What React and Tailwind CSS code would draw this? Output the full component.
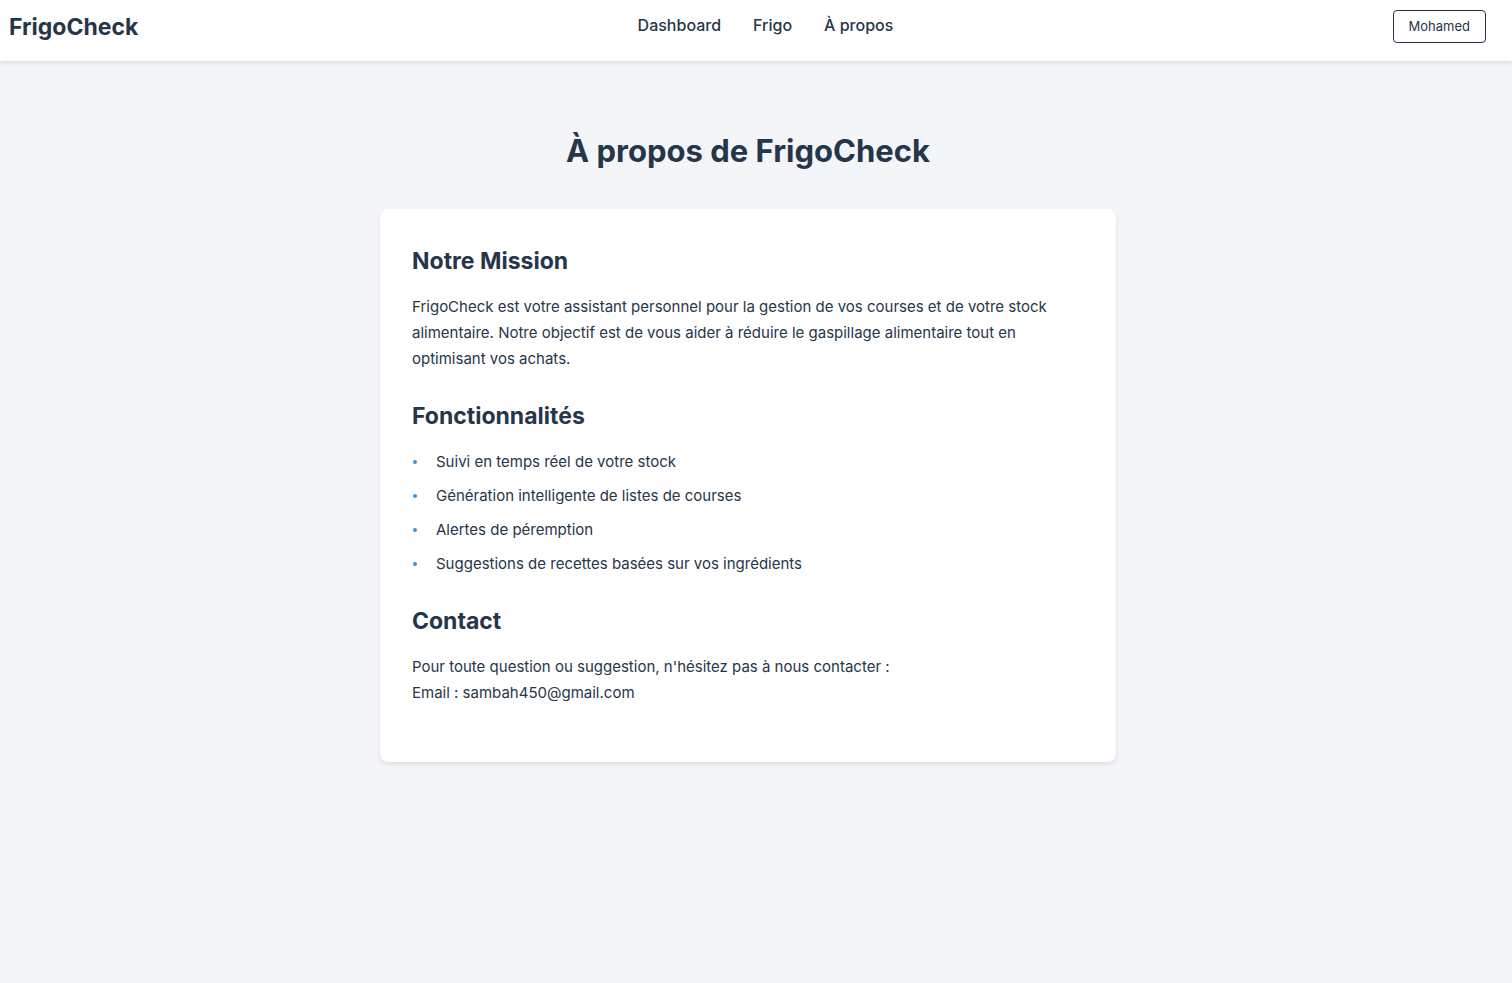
const features = [
  "Suivi en temps réel de votre stock",
  "Génération intelligente de listes de courses",
  "Alertes de péremption",
  "Suggestions de recettes basées sur vos ingrédients",
];

function Header() {
  return (
    <header className="flex h-[61px] items-start justify-between bg-white pt-[10px] pr-[26px] pl-[9px] shadow-[0_2px_4px_rgba(0,0,0,0.1)]">
      <a href="#" className="text-[23px] leading-[34px] font-bold">FrigoCheck</a>
      <nav className="flex gap-8 pt-[3px] text-base font-medium">
        <a href="#dashboard">Dashboard</a>
        <a href="#frigo">Frigo</a>
        <a href="#a-propos">À propos</a>
      </nav>
      <button className="h-[33px] rounded border border-[#263649] px-[15px] text-[13px]">
        Mohamed
      </button>
    </header>
  );
}

function Section({ title, children }) {
  return (
    <section className="mb-6">
      <h2 className="mb-[13px] text-[23px] leading-[40px] font-bold">{title}</h2>
      {children}
    </section>
  );
}

export default function App() {
  return (
    <div className="min-h-screen bg-[#f3f5f9] font-[Inter,sans-serif] text-[#263649]">
      <Header />
      <div className="pr-4">
        <main className="mx-auto max-w-[736px]">
          <h1 className="pt-16 pb-8 text-center text-[31px] leading-[52px] font-bold">À propos de FrigoCheck</h1>
          <div className="rounded-lg bg-white p-8 text-[15px] leading-[26px] shadow-[0_2px_4px_rgba(0,0,0,0.1)]">
            <Section title="Notre Mission">
              <p>
                FrigoCheck est votre assistant personnel pour la gestion de vos courses et de votre stock
                alimentaire. Notre objectif est de vous aider à réduire le gaspillage alimentaire tout en
                optimisant vos achats.
              </p>
            </Section>
            <Section title="Fonctionnalités">
              <ul className="flex flex-col gap-2">
                {features.map((feature) => (
                  <li key={feature} className="flex items-center">
                    <span className="mr-[19px] ml-px size-1 shrink-0 rounded-full bg-[#3498db]" />
                    {feature}
                  </li>
                ))}
              </ul>
            </Section>
            <Section title="Contact">
              <p>
                Pour toute question ou suggestion, n'hésitez pas à nous contacter :<br />
                Email : sambah450@gmail.com
              </p>
            </Section>
          </div>
        </main>
      </div>
    </div>
  );
}
